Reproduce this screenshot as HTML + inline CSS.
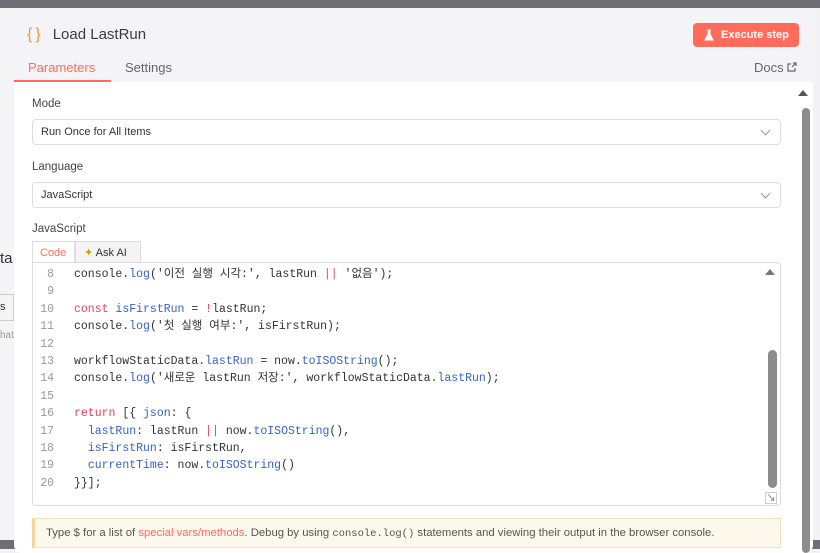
<!DOCTYPE html>
<html><head><meta charset="utf-8"><style>
*{box-sizing:border-box;margin:0;padding:0}
body{width:820px;height:549px;overflow:hidden;background:#f3f3f6;font-family:"Liberation Sans","Noto Sans CJK KR",sans-serif;position:relative}
.top{position:absolute;left:0;top:0;width:820px;height:8px;background:#6f6e77}
.bot{position:absolute;left:0;top:540px;width:820px;height:9px;background:#6f6e77}
.side{position:absolute;left:0;top:8px;width:14px;height:532px;background:#f4f4f7}
.modal{position:absolute;left:14px;top:8px;width:799px;height:545px;background:#fff;border-radius:8px;overflow:hidden}
.head{position:absolute;left:0;top:0;width:799px;height:74px;background:#f4f4f8}
.title{position:absolute;left:13px;top:18px;font-size:15px;color:#3a3a45}
.title b{color:#f5963a;font-weight:normal;margin-right:9px;font-size:16px;letter-spacing:3px}
.exec{position:absolute;left:679px;top:15px;width:106px;height:24px;background:#ff6d5a;border-radius:4px;color:#fff;font-size:11px;font-weight:bold;line-height:24px;padding-left:28px}
.tab{position:absolute;top:52px;font-size:13px;color:#666}
.tabact{color:#ff6d5a;left:14px}
.uline{position:absolute;left:0;top:72px;width:97px;height:2px;background:#ff6d5a}
.docs{position:absolute;left:740px;top:52px;font-size:13px;color:#666}
.lbl{position:absolute;left:18px;font-size:11.5px;color:#444}
.inp{position:absolute;left:18px;width:749px;height:26px;border:1px solid #dcdce2;border-radius:4px;font-size:11px;color:#333;line-height:24px;padding-left:8px}
.inp:after{content:"";position:absolute;right:11px;top:7px;width:6px;height:6px;border-right:1px solid #999;border-bottom:1px solid #999;transform:rotate(45deg)}
.code{position:absolute;left:18px;top:254px;width:749px;height:244px;border:1px solid #dcdce2;border-radius:0 4px 4px 4px}
.ctab{position:absolute;top:233px;height:22px;font-size:11px;line-height:22px;border:1px solid #dcdce2;border-bottom:none;background:#fff}
pre{position:absolute;left:0;top:258px;font-family:"Liberation Mono","Noto Sans CJK KR",monospace;font-size:11.5px;line-height:17.4px;color:#333}
.ln{position:absolute;left:18px;top:258px;width:22px;text-align:right;font-family:"Liberation Mono",monospace;font-size:11.5px;line-height:17.4px;color:#999}
.k{color:#e0445a}.p{color:#3563c9}
.hint{position:absolute;left:18px;top:510px;width:749px;height:30px;background:#fdf8ec;border:1px solid #f3e3bd;border-left:3px solid #f3d79a;font-size:11.3px;color:#555;line-height:28px;padding-left:11px;white-space:nowrap}
.hint span{color:#ff6d5a}
</style></head><body>
<div class="top"></div><div class="side"></div><div class="bot"></div>
<div style="position:absolute;left:0;top:250px;font-size:15px;color:#333">ta</div>
<div style="position:absolute;left:0;top:294px;width:14px;height:27px;border:1px solid #ccc;border-left:none;font-size:11px;line-height:24px;overflow:hidden;color:#333">s n</div>
<div style="position:absolute;left:0;top:330px;font-size:10px;color:#999">hat</div>
<div class="modal">
<div class="head">
<div class="title"><b>{}</b>Load LastRun</div>
<div class="exec"><svg style="position:absolute;left:11px;top:6px" width="10" height="12" viewBox="0 0 10 12"><path d="M3 1h4M4 1v4L1 11h8L6 5V1" fill="#fff" stroke="#fff"/></svg>Execute step</div>
<div class="tab tabact">Parameters</div>
<div class="tab" style="left:111px">Settings</div>
<div class="uline"></div>
<div class="docs">Docs <svg width="10" height="10" viewBox="0 0 10 10"><path d="M4 2H1v7h7V6M5 5l4-4M6 1h3v3" fill="none" stroke="#666" stroke-width="1.2"/></svg></div>
</div>
<div class="lbl" style="top:90px">Mode</div>
<div class="inp" style="top:111px">Run Once for All Items</div>
<div class="lbl" style="top:153px">Language</div>
<div class="inp" style="top:174px">JavaScript</div>
<div class="lbl" style="top:215px">JavaScript</div>
<div class="ctab" style="left:18px;width:43px;color:#ff6d5a;padding-left:7px">Code</div>
<div class="ctab" style="left:61px;width:66px;background:#f4f4f7;padding-left:8px;color:#333"><span style="color:#c9a200">✦</span> Ask AI</div>
<div class="code"></div>
<div class="ln">8<br>9<br>10<br>11<br>12<br>13<br>14<br>15<br>16<br>17<br>18<br>19<br>20</div>
<pre style="left:60px">console.<span class="p">log</span>('이전 실행 시각:', lastRun <span class="k">||</span> '없음');

<span class="k">const</span> <span class="p">isFirstRun</span> = <span class="k">!</span>lastRun;
console.<span class="p">log</span>('첫 실행 여부:', isFirstRun);

workflowStaticData.<span class="p">lastRun</span> = now.<span class="p">toISOString</span>();
console.<span class="p">log</span>('새로운 lastRun 저장:', workflowStaticData.<span class="p">lastRun</span>);

<span class="k">return</span> [{ <span class="p">json</span>: {
  <span class="p">lastRun</span>: lastRun <span class="k">||</span> now.<span class="p">toISOString</span>(),
  <span class="p">isFirstRun</span>: isFirstRun,
  <span class="p">currentTime</span>: now.<span class="p">toISOString</span>()
}}];</pre>
<div style="position:absolute;left:751px;top:261px;border-left:5px solid transparent;border-right:5px solid transparent;border-bottom:6px solid #777"></div>
<div style="position:absolute;left:754px;top:342px;width:9px;height:138px;border-radius:5px;background:#8c8c8c"></div>
<div style="position:absolute;left:751px;top:484px;width:12px;height:12px;border:1px solid #ccc;font-size:9px;line-height:10px;text-align:center;color:#555">↘</div>
<div class="hint">Type $ for a list of <span>special vars/methods</span>. Debug by using <code style="font-family:'Liberation Mono',monospace;font-size:10.5px">console.log()</code> statements and viewing their output in the browser console.</div>
<div style="position:absolute;left:784px;top:82px;border-left:5px solid transparent;border-right:5px solid transparent;border-bottom:6px solid #555"></div>
<div style="position:absolute;left:788px;top:100px;width:8px;height:445px;border-radius:4px;background:#8c8c8c"></div>
</div>
</body></html>
